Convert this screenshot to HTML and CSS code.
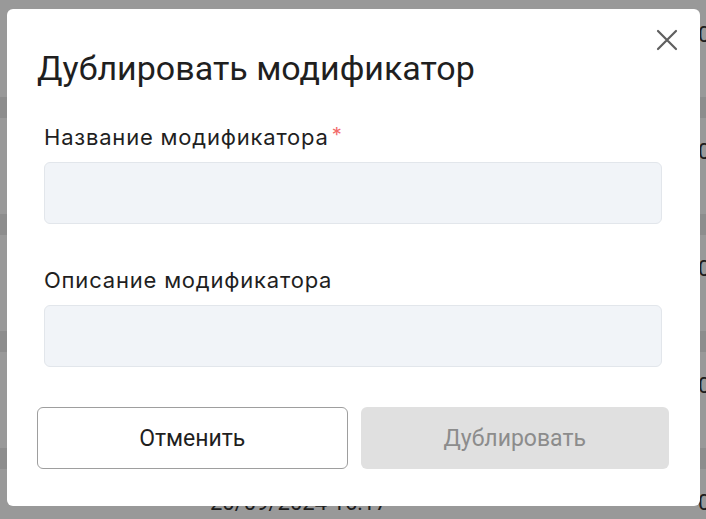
FILE: index.html
```html
<!DOCTYPE html>
<html lang="ru">
<head>
  <meta charset="UTF-8" />
  <title>Дублировать модификатор</title>
  <link rel="stylesheet" href="styles.css">
</head>
<body>

  <!-- Таблица на фоне -->
  <div class="table">
    <div class="row"><span class="cell-date">20/09/2024 16:17</span><span class="cell-end">01/09/2024</span></div>
    <div class="row"><span class="cell-date">20/09/2024 16:17</span><span class="cell-end">01/09/2024</span></div>
    <div class="row"><span class="cell-date">20/09/2024 16:17</span><span class="cell-end">01/09/2024</span></div>
    <div class="row"><span class="cell-date">20/09/2024 16:17</span><span class="cell-end">01/09/2024</span></div>
    <div class="row"><span class="cell-date">20/09/2024 16:17</span><span class="cell-end">01/09/2024</span></div>
  </div>

  <div class="overlay">
    <div class="modal">
      <button class="close" type="button" aria-label="Закрыть">
        <svg width="22" height="22" viewBox="0 0 22 22">
          <path d="M2 2 L20 20 M20 2 L2 20" stroke="#5f5f5f" stroke-width="2.2" stroke-linecap="round" fill="none"/>
        </svg>
      </button>

      <h2 class="modal-title">Дублировать модификатор</h2>

      <form class="fields">
        <label class="field">
          <span class="label">Название модификатора<span class="req">*</span></span>
          <input type="text" class="input" />
        </label>
        <label class="field">
          <span class="label">Описание модификатора</span>
          <input type="text" class="input" />
        </label>
      </form>

      <div class="actions">
        <button type="button" class="btn btn-cancel">Отменить</button>
        <button type="button" class="btn btn-primary" disabled>Дублировать</button>
      </div>
    </div>
  </div>

</body>
</html>
```

FILE: styles.css
```css
/* Общие стили */
body {
  margin: 0;
  font-family: Roboto, "Liberation Sans", sans-serif;
  background: #fff;
  overflow: hidden;
}

/* Таблица за модальным окном */
.table {
  padding-top: 1px;
  width: 100%;
  height: 519px;
  overflow: hidden;
}

.row {
  display: flex;
  box-sizing: border-box;
  height: 117px;
  padding-top: 21px;
  border-bottom: 21px solid #ececec;
  font-size: 22px;
  color: #333;
  white-space: nowrap;
}

.cell-date {
  margin-left: 210px;
  width: 488px;
  flex: none;
}

.cell-end {
  flex: none;
}

/* Затемнение и модальное окно */
.overlay {
  position: fixed;
  inset: 0;
  background: rgba(0, 0, 0, 0.4);
}

.modal {
  position: absolute;
  left: 7px;
  top: 9px;
  width: 693px;
  height: 497px;
  box-sizing: border-box;
  background: #fff;
  border-radius: 6px;
  padding: 40px 31px 0 30px;
}

.close {
  position: absolute;
  top: 20px;
  right: 22px;
  width: 22px;
  height: 22px;
  padding: 0;
  border: none;
  background: none;
  cursor: pointer;
}

.modal-title {
  margin: 0;
  font-size: 34px;
  font-weight: 400;
  color: #1f1f1f;
  line-height: 38px;
}

.fields {
  display: flex;
  flex-direction: column;
  gap: 43px;
  padding: 0 7px;
  margin-top: 35px;
}

.field {
  display: flex;
  flex-direction: column;
  gap: 12px;
}

.label {
  font-family: Inter, "Noto Sans", sans-serif;
  font-size: 22px;
  letter-spacing: 0.8px;
  color: #1f1f1f;
  line-height: 26px;
}

.req {
  color: #f26b6b;
  font-size: 20px;
  vertical-align: 3px;
  margin-left: 3px;
}

.input {
  height: 62px;
  box-sizing: border-box;
  background: #f1f4f8;
  border: 1px solid #e2e6eb;
  border-radius: 6px;
  font-size: 18px;
  padding: 0 14px;
}

.actions {
  display: flex;
  gap: 13px;
  margin-top: 40px;
}

.btn {
  flex: 1 1 0;
  height: 62px;
  border-radius: 6px;
  font-family: Roboto, "Liberation Sans", sans-serif;
  font-size: 23px;
  font-weight: 400;
  cursor: pointer;
}

.btn-cancel {
  background: #fff;
  border: 1px solid #9e9e9e;
  color: #1f1f1f;
}

.btn-primary {
  background: #e0e0e0;
  border: none;
  color: #8c8c8c;
}
```
